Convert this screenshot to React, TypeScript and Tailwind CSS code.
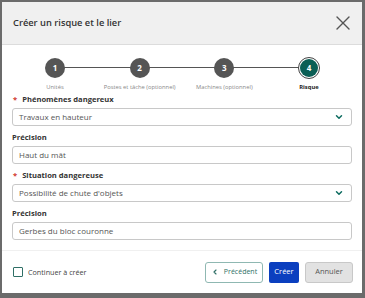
import { X, ChevronDown, ChevronLeft } from "lucide-react"

const steps = [
  { n: "1", label: "Unités" },
  { n: "2", label: "Postes et tâche (optionnel)" },
  { n: "3", label: "Machines (optionnel)" },
  { n: "4", label: "Risque", active: true },
]

function Label({ children, required }: { children: string; required?: boolean }) {
  return (
    <div className="flex items-center h-[12px] text-[7.6px] font-bold text-[#333] leading-none">
      {required && <span className="text-[#d0342c] mr-[5px] ml-px">*</span>}
      {children}
    </div>
  )
}

function Select({ value }: { value: string }) {
  return (
    <div className="mt-[2px] h-[18px] shrink-0 border border-[#c8c8c8] rounded-[3px] flex items-center justify-between pl-[6px] pr-[7px] text-[8px] text-[#555]">
      <span>{value}</span>
      <ChevronDown size={10} strokeWidth={3.5} className="text-[#0b6b5f]" />
    </div>
  )
}

function Input({ value }: { value: string }) {
  return (
    <div className="mt-[2px] h-[18px] shrink-0 border border-[#c8c8c8] rounded-[3px] flex items-center px-[6px] text-[8px] text-[#555]">
      {value}
    </div>
  )
}

export default function App() {
  return (
    <div
      className="w-[365px] h-[298px] bg-[#6b6b6b] pt-[2px] pl-[2px] pr-[3px] pb-[5px]"
      style={{ fontFamily: '"Open Sans", "Noto Sans", sans-serif' }}
    >
      <div className="w-full h-full bg-white flex flex-col">
        {/* Header */}
        <div className="h-[43px] shrink-0 bg-[#f0f0f0] border-b border-[#dcdcdc] flex items-center justify-between pl-[11px] pr-[7px]">
          <span className="text-[9.3px] font-semibold text-[#333]">Créer un risque et le lier</span>
          <X size={24} strokeWidth={1.4} className="text-[#555]" />
        </div>

        {/* Stepper */}
        <div className="relative shrink-0 flex justify-between px-[11px] pt-[12px]">
          <div className="absolute left-[53px] right-[52px] top-[22px] h-px bg-[#555]" />
          {steps.map((s) => (
            <div key={s.n} className="relative w-[84px] flex flex-col items-center">
              {s.active ? (
                <div className="w-[22px] h-[22px] rounded-full border border-[#444] bg-white flex items-center justify-center">
                  <div className="w-[18px] h-[18px] rounded-full bg-[#0b5f55] text-white text-[8px] font-bold flex items-center justify-center">
                    {s.n}
                  </div>
                </div>
              ) : (
                <div className="w-[20px] h-[20px] my-px rounded-full bg-[#555] text-white text-[8px] font-bold flex items-center justify-center">
                  {s.n}
                </div>
              )}
              <span
                className={
                  "mt-[4px] text-[5.8px] leading-[8px] whitespace-nowrap " +
                  (s.active ? "font-bold text-[#222]" : "text-[#888]")
                }
              >
                {s.label}
              </span>
            </div>
          ))}
        </div>

        {/* Form */}
        <div className="shrink-0 px-[10px] pt-[3px] flex flex-col">
          <Label required>Phénomènes dangereux</Label>
          <Select value="Travaux en hauteur" />
          <div className="mt-[6px]">
            <Label>Précision</Label>
          </div>
          <Input value="Haut du mât" />
          <div className="mt-[6px]">
            <Label required>Situation dangereuse</Label>
          </div>
          <Select value="Possibilité de chute d'objets" />
          <div className="mt-[6px]">
            <Label>Précision</Label>
          </div>
          <Input value="Gerbes du bloc couronne" />
        </div>

        {/* Footer */}
        <div className="mt-[10px] border-t border-[#f0f0f0] flex-1 flex items-center justify-between pl-[11px] pr-[9px]">
          <div className="flex items-center gap-[5px]">
            <div className="w-[10px] h-[10px] border border-[#2f6f66] rounded-[1px]" />
            <span className="text-[7.2px] text-[#444]">Continuer à créer</span>
          </div>
          <div className="flex items-center gap-[6px]">
            <div className="h-[21px] w-[58px] border border-[#8fb8b2] rounded-[3px] flex items-center justify-center gap-[5px] text-[7px] text-[#2f6f66]">
              <ChevronLeft size={8} strokeWidth={3.5} />
              Précédent
            </div>
            <div className="h-[21px] w-[30px] bg-[#0b3fbf] rounded-[2px] flex items-center justify-center text-[7.5px] text-white">
              Créer
            </div>
            <div className="h-[21px] w-[48px] bg-[#e2e2e2] border border-[#c8c8c8] rounded-[3px] flex items-center justify-center text-[7.5px] text-[#555]">
              Annuler
            </div>
          </div>
        </div>
      </div>
    </div>
  )
}
